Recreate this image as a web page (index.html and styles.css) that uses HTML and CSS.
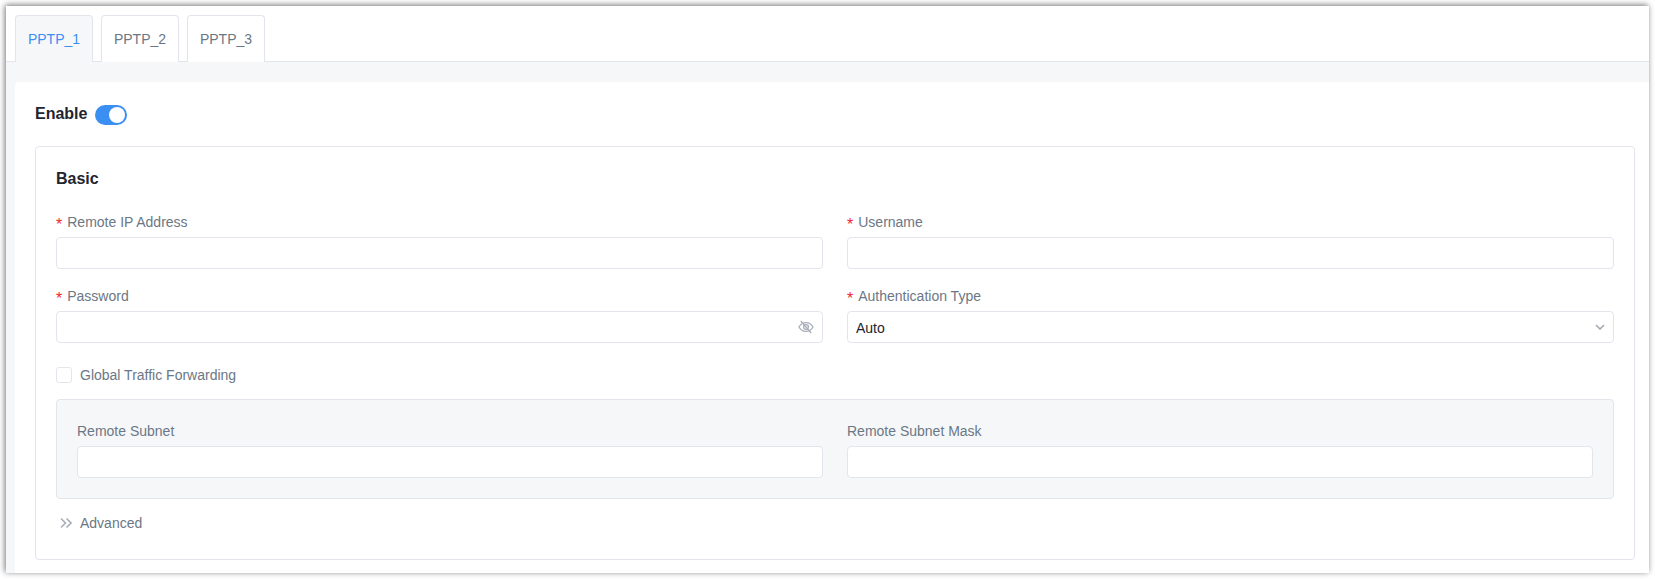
FILE: index.html
```html
<!DOCTYPE html>
<html lang="en">
<head>
    <meta charset="UTF-8">
    <title>PPTP</title>
    <link rel="stylesheet" href="styles.css">
</head>
<body>
    <div class="frame">
        <div class="tabs">
            <div class="tab active">PPTP_1</div>
            <div class="tab">PPTP_2</div>
            <div class="tab">PPTP_3</div>
        </div>
        <div class="content">
            <div class="panel">
                <div class="enable">
                    <span class="enable-label">Enable</span>
                    <span class="switch"><span class="knob"></span></span>
                </div>
                <div class="section">
                    <h3>Basic</h3>
                    <div class="grid">
                        <div class="field">
                            <label><span class="req">*</span>Remote IP Address</label>
                            <div class="input"></div>
                        </div>
                        <div class="field">
                            <label><span class="req">*</span>Username</label>
                            <div class="input"></div>
                        </div>
                        <div class="field">
                            <label><span class="req">*</span>Password</label>
                            <div class="input with-icon">
                                <svg class="eye" width="16" height="16" viewBox="0 0 16 16" fill="none" stroke="#a9aeb8" stroke-width="1.3">
                                    <path d="M1 8c1.600-2.900 4-4.400 7-4.400s5.400 1.500 7 4.400c-1.600 2.900-4 4.400-7 4.400S2.600 10.900 1 8z"/>
                                    <circle cx="8" cy="8" r="2.400"/>
                                    <path d="M2.800 2l10.400 12"/>
                                </svg>
                            </div>
                        </div>
                        <div class="field">
                            <label><span class="req">*</span>Authentication Type</label>
                            <div class="input select">
                                <span class="value">Auto</span>
                                <svg width="10" height="6" viewBox="0 0 10 6" fill="none" stroke="#a0a5b0" stroke-width="1.500">
                                    <path d="M1 1l4 4 4-4"/>
                                </svg>
                            </div>
                        </div>
                    </div>
                    <div class="check-row">
                        <span class="checkbox"></span>
                        <span>Global Traffic Forwarding</span>
                    </div>
                    <div class="subnet">
                        <div class="field">
                            <label>Remote Subnet</label>
                            <div class="input"></div>
                        </div>
                        <div class="field">
                            <label>Remote Subnet Mask</label>
                            <div class="input"></div>
                        </div>
                    </div>
                    <div class="advanced">
                        <svg width="12" height="12" viewBox="0 0 12 12" fill="none" stroke="#a9aeb8" stroke-width="1.600">
                            <path d="M1 1.500L5.500 6 1 10.500"/>
                            <path d="M6.500 1.500L11 6l-4.500 4.500"/>
                        </svg>
                        <span>Advanced</span>
                    </div>
                </div>
            </div>
        </div>
    </div>
</body>
</html>
```

FILE: styles.css
```css
* {
    box-sizing: border-box;
}
body {
    margin: 0;
    height: 579px;
    padding: 6px;
    background-color: white;
    font-family: "Liberation Sans", Arial, sans-serif;
    font-size: 14px;
    color: #6b7785;
    overflow: hidden;
}
.frame {
    height: 567px;
    display: flex;
    flex-direction: column;
    background-color: white;
    box-shadow: -1px -1px 6px rgba(0,0,0,0.55);
}
.tabs {
    height: 56px;
    padding: 9px 0 0 9px;
    display: flex;
    gap: 8px;
    border-bottom: 1px solid #e3e5ec;
}
.tab {
    width: 78px;
    height: 47px;
    display: flex;
    align-items: center;
    justify-content: center;
    background-color: white;
    border: 1px solid #e3e5ec;
    border-bottom: none;
    border-radius: 4px 4px 0 0;
}
.tab.active {
    background-color: #f6f7f9;
    color: #3b8ff3;
}
.content {
    flex: 1;
    padding: 20px 0 0 9px;
    background-color: #f6f7f9;
}
.panel {
    height: 100%;
    padding: 21px 14px 0 20px;
    background-color: white;
    border-radius: 4px 0 0 0;
}
.enable {
    height: 24px;
    display: flex;
    align-items: center;
    gap: 8px;
}
.enable-label {
    margin-bottom: 3px;
    font-weight: bold;
    font-size: 16px;
    color: #22252f;
}
.switch {
    width: 32px;
    height: 20px;
    padding: 2px;
    display: flex;
    justify-content: flex-end;
    background-color: #3b8ff3;
    border-radius: 10px;
}
.knob {
    width: 16px;
    height: 16px;
    background-color: white;
    border-radius: 50%;
}
.section {
    height: 414px;
    margin-top: 19px;
    padding: 21px 20px 20px;
    border: 1px solid #e3e5ec;
    border-radius: 4px;
}
.section h3 {
    margin: 0 0 21px;
    height: 22px;
    line-height: 22px;
    font-size: 16px;
    color: #22252f;
}
.grid {
    display: grid;
    grid-template-columns: 1fr 1fr;
    column-gap: 24px;
    row-gap: 16px;
}
label {
    display: block;
    height: 22px;
    line-height: 22px;
    margin-bottom: 4px;
}
.req {
    color: #f0292e;
    font-size: 16px;
    line-height: 1;
    vertical-align: -3px;
    margin-right: 5px;
}
.input {
    height: 32px;
    display: flex;
    align-items: center;
    justify-content: space-between;
    padding: 0 8px;
    background-color: white;
    border: 1px solid #e3e5ec;
    border-radius: 4px;
}
.with-icon {
    justify-content: flex-end;
}
.select {
    color: #22252f;
}
.value {
    margin-top: 1px;
}
.check-row {
    margin-top: 24px;
    height: 16px;
    display: flex;
    align-items: center;
    gap: 8px;
}
.checkbox {
    width: 16px;
    height: 16px;
    background-color: white;
    border: 1px solid #e3e5ec;
    border-radius: 3px;
}
.subnet {
    margin-top: 16px;
    height: 100px;
    padding: 20px;
    display: grid;
    grid-template-columns: 1fr 1fr;
    column-gap: 24px;
    background-color: #f6f7f9;
    border: 1px solid #e3e5ec;
    border-radius: 4px;
}
.advanced {
    margin-top: 14px;
    height: 20px;
    padding-left: 4px;
    display: flex;
    align-items: center;
    gap: 8px;
}
```
